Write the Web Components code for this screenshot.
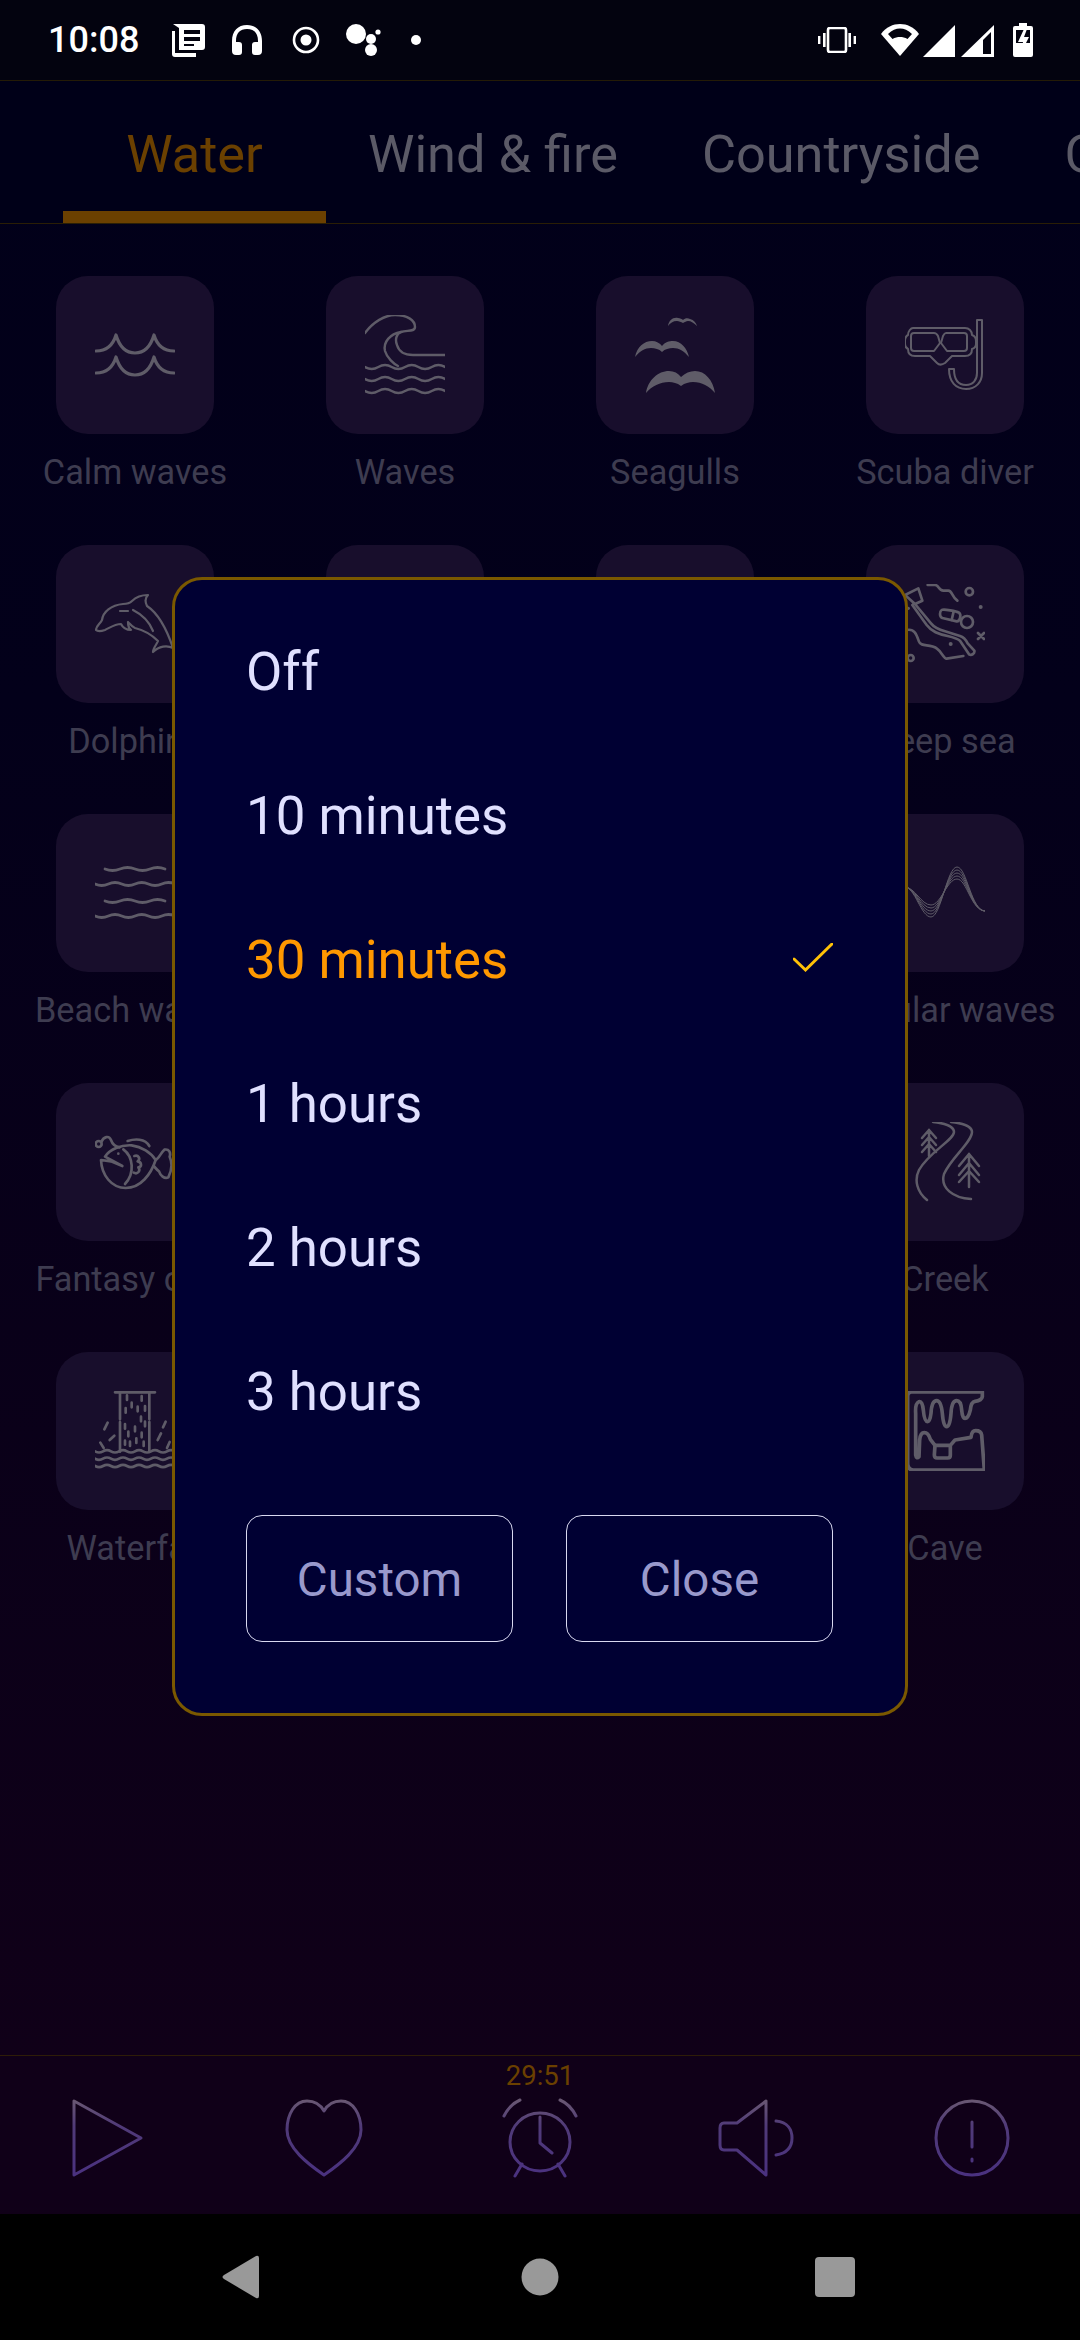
<!DOCTYPE html>
<html lang="en"><head><meta charset="utf-8"><title>Sleep timer</title>
<style>
html,body{margin:0;padding:0;background:#000}
body{width:1080px;height:2340px;overflow:hidden;font-family:Roboto,"Liberation Sans",sans-serif}
</style></head><body>
<sound-app>
  <status-bar slot="status"></status-bar>
  <sound-tabs slot="tabs"><tab-item active>Water</tab-item><tab-item>Wind &amp; fire</tab-item><tab-item>Countryside</tab-item><tab-item>City</tab-item></sound-tabs>
  <sound-grid slot="grid">
    <sound-tile icon="calm">Calm waves</sound-tile><sound-tile icon="waves">Waves</sound-tile><sound-tile icon="gulls">Seagulls</sound-tile><sound-tile icon="scuba">Scuba diver</sound-tile>
    <sound-tile icon="dolphin">Dolphins</sound-tile><sound-tile></sound-tile><sound-tile></sound-tile><sound-tile icon="deep">Deep sea</sound-tile>
    <sound-tile icon="beach">Beach waves</sound-tile><sound-tile></sound-tile><sound-tile></sound-tile><sound-tile icon="regular">Regular waves</sound-tile>
    <sound-tile icon="fish">Fantasy cave</sound-tile><sound-tile></sound-tile><sound-tile></sound-tile><sound-tile icon="creek">Creek</sound-tile>
    <sound-tile icon="fall">Waterfall</sound-tile><sound-tile></sound-tile><sound-tile></sound-tile><sound-tile icon="cave">Cave</sound-tile>
  </sound-grid>
  <player-bar slot="player" time="29:51"></player-bar>
  <nav-bar slot="nav"></nav-bar>
  <timer-dialog slot="dialog">
    <dialog-option>Off</dialog-option><dialog-option>10 minutes</dialog-option><dialog-option selected>30 minutes</dialog-option><dialog-option>1 hours</dialog-option><dialog-option>2 hours</dialog-option><dialog-option>3 hours</dialog-option>
    <outline-button slot="actions">Custom</outline-button><outline-button slot="actions">Close</outline-button>
  </timer-dialog>
</sound-app>
<script>
const wave=(x,y,n,w,a)=>{let d=`M${x} ${y}`;for(let i=0;i<n;i++){d+=` q${w/4} ${-a} ${w/2} 0 t${w/2} 0`;}return d;};
const IC={
calm:{vb:'0 0 80 80',sw:3.2,h:`<path d="M1 36C12 36 18 30 21 20C24 30 30 38 40 38C50 38 56 30 59 20C62 30 68 36 79 36M1 58C12 58 18 52 21 42C24 52 30 60 40 60C50 60 56 52 59 42C62 52 68 58 79 58"/>`},
waves:{vb:'0 0 80 80',sw:2.4,h:`<path d="M0 18C8 7 20 0 30 0C42 0 50 5 50 12C50 17 42 15 36 17C31 19 30 25 32 30C34 37 40 40 48 40H80"/><path d="M36 17C25 19 18 27 20 36C22 43 29 49 33 51"/><path d="${wave(0,52,3,26.7,-4)}"/><path d="${wave(0,64,3,26.7,-4)}"/><path d="${wave(0,76,3,26.7,-4)}"/>`},
gulls:{vb:'0 0 80 80',sw:0,h:`<g class="f"><path d="M33 11C34 5 38 2 43 3C45 3 47 4 48 5C50 3 53 3 55 4C59 5 61 8 62 11C59 8 56 6 53 6C51 6 50 7 48 8C46 7 44 6 42 6C38 6 35 8 33 11Z"/><path d="M0 42C2 32 9 26 17 26C21 26 25 28 27 31C30 27 34 26 38 26C46 26 52 33 54 42C49 36 44 33 38 33C34 33 30 34 27 37C24 34 20 33 16 33C10 33 5 36 0 42Z"/><path d="M11 78C13 65 23 56 34 56C39 56 43 58 46 62C50 58 55 56 60 56C70 56 78 65 80 78C74 71 67 67 58 67C54 67 50 68 46 71C42 68 38 67 34 67C25 67 17 71 11 78Z"/></g>`},
scuba:{vb:'0 0 80 80',sw:2,h:`<path d="M77 5V58C77 67 71 74 61 74C51 74 44 67 44 54H49C49 64 53 70 61 70C68 70 72 65 72 58V5Z" /><path d="M8 13H60C64 13 67 16 67 20C70 21 71 23 71 26V29C71 32 70 33 67 34C67 39 64 41 60 41H47L40 48C37 50 34 50 32 48L25 41H10C6 41 3 39 3 34C1 33 0 31 0 29V26C0 23 1 21 3 20C3 16 6 13 8 13Z"/><path d="M9 18H29C31 18 32 19 33 21L35 28L29 36H9C7 36 6 35 6 33V21C6 19 7 18 9 18Z"/><path d="M41 18H59C61 18 62 19 62 21V33C62 35 61 36 59 36H42L36 28L38 21C39 19 40 18 41 18Z"/>`},
dolphin:{vb:'0 0 80 80',sw:2.2,h:`<path d="M1 46C1 42 5 40 7 36C8 28 16 21 28 20C32 20 35 19 37 17C41 13 47 11 53 11C50 14 50 18 52 22C64 30 72 46 78 64C72 61 64 62 58 68C58 64 62 60 63 57C56 50 48 46 40 44C37 43 35 40 33 38C33 41 33 44 36 46C32 46 28 44 26 40C20 40 16 43 10 46C7 47 3 48 1 46Z"/><path d="M25 27H33M38 26C46 30 54 37 58 47"/>`},
beach:{vb:'0 0 80 80',sw:2.8,h:`<path d="${wave(10,16,2,30,-3)}"/><path d="${wave(0,31,3,26.7,-3)}"/><path d="${wave(10,48,2,30,-3)}"/><path d="${wave(0,63,3,26.7,-3)}"/>`},
regular:{vb:'0 0 80 80',sw:1,h:[0,1,2,3,4].map(i=>`<path d="M0 34C10 34 16 ${64-i*3} 26 ${64-i*3}C36 ${64-i*3} 42 ${14+i*3} 52 ${14+i*3}C62 ${14+i*3} 66 58 80 58"/>`).join('')},
deep:{vb:'0 72 240 240',sw:8,h:`<path d="M68 75H90C102 75 100 92 115 92H130C142 92 140 110 157 122"/><circle cx="193" cy="95" r="11"/><circle cx="227" cy="141" r="6" class="f"/><circle cx="137" cy="252" r="6" class="f"/><path d="M219 219L237 237M237 219L219 237"/><circle cx="17" cy="294" r="9"/><circle cx="10" cy="145" r="5" class="f"/><path d="M0 105L40 85L52 122L30 132ZM30 132L78 190C88 203 100 208 120 214L165 228C178 232 183 240 188 250L208 272C210 280 200 288 192 283L165 242C158 236 145 232 128 228C100 222 80 215 65 195L22 135"/><path d="M110 150C116 146 155 154 162 158C170 164 165 185 155 184L112 174C102 170 104 154 110 150Z"/><path d="M146 154L140 180"/><circle cx="186" cy="186" r="18"/><path d="M5 210C30 205 35 225 42 245C48 262 75 250 95 265C110 275 115 295 125 296L175 288"/>`},
fish:{vb:'30 36 240 240',sw:8,h:`<circle cx="41" cy="102" r="9"/><path d="M49 96C56 80 72 75 78 90C82 102 90 110 104 112"/><path d="M128 93C150 86 180 85 193 108"/><path d="M60 140C74 118 108 104 140 106C170 110 198 128 212 150C198 192 168 234 122 234C80 234 50 196 48 150L78 154L112 168L60 140Z"/><path d="M115 118C145 140 150 190 120 222"/><circle cx="100" cy="131" r="4" class="f"/><path d="M148 138C160 134 168 146 158 154C170 156 172 170 160 172C168 182 158 194 146 188"/><path d="M212 150C222 146 226 130 238 119C252 116 258 128 254 140C262 158 260 182 250 202C238 208 226 196 222 184C216 180 210 172 206 168"/>`},
creek:{vb:'0 0 80 80',sw:2.5,h:`<path d="M28 0C38 1 49 4 49 10C49 18 24 30 14 48C9 58 12 70 22 78"/><path d="M46 0C56 1 67 4 67 10C67 20 46 36 39 52C35 66 48 76 66 77"/><path d="M24 8V34M24 8L17 16M24 8L31 16M24 15L17 23M24 15L31 23M24 22L17 30M24 22L31 30" /><path d="M64 32V65M64 32L54 44M64 32L74 44M64 41L54 53M64 41L74 53M64 49L54 60M64 49L74 60"/>`},
fall:{vb:'30 33 240 240',sw:8,h:`<path d="M90 37H210M105 37V118M105 126V215M193 37V118M193 126V215"/><g stroke-dasharray="14 60"><path d="M126 46V70M170 48V62M140 68V82M158 80V100M122 84V98M180 78V94M168 110V124M120 132V146M150 140V156M180 125V145M130 155V172M170 158V172M120 182V194M154 175V190M135 185V198M176 185V198"/></g><path d="M68 128L58 148M242 125L234 142M88 167L74 180M228 160L218 180M46 188L56 204M254 186L246 204"/><path d="${wave(30,214,5,48,-7)}"/><path d="${wave(30,236,5,48,-7)}"/><path d="${wave(30,258,5,48,-7)}"/>`},
cave:{vb:'0 33 240 240',sw:11,h:`<path d="M232 36H20Q8 36 8 50V250Q8 270 25 270H238L230 165Q228 152 212 152Q200 152 198 172L150 180L136 196H90L88 225Q88 234 96 234H128Q136 234 136 226V196"/><path d="M90 196L76 178Q70 158 58 158Q46 158 44 180L42 230Q34 238 32 225V100Q30 70 42 65Q52 62 55 90Q58 125 68 125Q75 125 78 100Q80 62 95 62Q108 62 112 100Q115 140 125 140Q135 140 138 100Q140 62 155 62Q168 62 170 90Q172 115 180 115Q190 115 196 90Q198 66 210 64Q230 62 232 50V36"/>`}
};
const mk=(tag,css,html)=>{customElements.define(tag,class extends HTMLElement{
  constructor(){super();const r=this.attachShadow({mode:'open'});r.innerHTML=`<style>${css}</style>${typeof html==='function'?html(this):html}`;}
});};

mk('sound-app',`:host{display:block;position:relative;width:1080px;height:2340px;overflow:hidden}
.wrap{display:flex;flex-direction:column;height:100%;background:linear-gradient(#010019 0%,#03001a 30%,#100018 88%)}
.fill{flex:1;min-height:0}`,
`<div class="wrap"><slot name="status"></slot><slot name="tabs"></slot><div class="fill"><slot name="grid"></slot></div><slot name="player"></slot><slot name="nav"></slot></div><slot name="dialog"></slot>`);

mk('status-bar',`:host{display:block;height:80px;box-sizing:content-box;background:#03030f;border-bottom:1px solid #241b06}
.row{display:flex;align-items:center;height:80px}
.t{font:500 36px/80px Roboto,sans-serif;color:#fff;margin-left:48px;width:124px}
svg{display:block;fill:#fff}
.l{flex:1}`,
`<div class="row"><span class="t">10:08</span>
<svg width="34" height="34" viewBox="0 0 34 34"><path d="M1 1H30Q33 1 33 4V24Q33 27 30 27H7V5Z"/><path d="M0 8H3V30H24V34H3Q0 34 0 31Z"/><path d="M12 8H28V12H12ZM12 15H28V19H12ZM12 22H22V24H12Z" fill="#03030f" transform="translate(0 -1)"/></svg>
<svg width="32" height="32" viewBox="0 0 32 32" style="margin-left:25px"><path d="M1 17C1 7 7 1 16 1S31 7 31 17V27Q31 31 27 31H24Q21 31 21 28V21Q21 18 24 18H27V17C27 9 23 5 16 5S5 9 5 17V18H8Q11 18 11 21V28Q11 31 8 31H5Q1 31 1 27Z"/></svg>
<svg width="28" height="28" viewBox="0 0 28 28" style="margin-left:29px"><circle cx="14" cy="14" r="12" fill="none" stroke="#fff" stroke-width="2.6"/><circle cx="14" cy="14" r="5.5"/></svg>
<svg width="38" height="34" viewBox="0 0 38 34" style="margin-left:25px"><circle cx="11" cy="11" r="10"/><circle cx="26" cy="16" r="5"/><circle cx="33" cy="9" r="2.6"/><circle cx="26" cy="27" r="6"/></svg>
<svg width="10" height="10" viewBox="0 0 10 10" style="margin-left:28px"><circle cx="5" cy="5" r="5"/></svg>
<span class="l"></span>
<svg width="38" height="26" viewBox="0 0 38 26" style="margin-right:24px"><path d="M10 3Q10 1 12 1H26Q28 1 28 3V23Q28 25 26 25H12Q10 25 10 23Z" fill="none" stroke="#fff" stroke-width="2.6"/><path d="M5 6H7.6V20H5ZM0 9H2.4V17H0ZM30.4 6H33V20H30.4ZM35.6 9H38V17H35.6Z"/></svg>
<svg width="40" height="34" viewBox="0 0 40 34" style="margin-right:3px"><path d="M20 33L1 11C6 4 13 1 20 1S34 4 39 11Z"/><path d="M8 11C12 7 16 5.5 20 5.5S28 7 32 11L27.5 16C25 14.5 22.5 14 20 14S15 14.5 12.5 16Z" fill="#03030f"/></svg>
<svg width="33" height="33" viewBox="0 0 33 33" style="margin-right:5px"><path d="M32 1V33H0Z"/></svg>
<svg width="33" height="33" viewBox="0 0 33 33" style="margin-right:19px"><path d="M33 1V33H0ZM30 8L22 16V30H30Z" fill-rule="evenodd"/></svg>
<svg width="20" height="34" viewBox="0 0 20 34" style="margin-right:47px"><path d="M6 0H14V3H18Q20 3 20 5V32Q20 34 18 34H2Q0 34 0 32V5Q0 3 2 3H6Z"/><path d="M3 7H17V20H3Z" fill="#03030f"/><path d="M11 6L5 19H10L8 30L16 14H11L14 6Z"/></svg>
</div>`);

mk('sound-tabs',`:host{display:flex;height:142px;box-sizing:content-box;background:#000018;border-bottom:1px solid #2a1e05;padding-left:63px;overflow:hidden;white-space:nowrap}`,`<slot></slot>`);
mk('tab-item',`:host{display:block;flex:none;position:relative;height:142px;box-sizing:border-box;padding:0 42px;font:400 52.3px/146px Roboto,sans-serif;color:#5b5a67;text-align:center;overflow:hidden}
:host([active]){color:#6b4000;width:263px;padding:0}
:host([active])::after{content:"";position:absolute;left:0;right:0;bottom:0;height:12px;background:#6b4000}`,`<slot></slot>`);

mk('sound-grid',`:host{display:grid;grid-template-columns:repeat(4,270px);grid-auto-rows:269px;padding-top:52px}`,`<slot></slot>`);
mk('sound-tile',`:host{display:flex;flex-direction:column;align-items:center;color:#3e3c50;font:400 34.3px/36px Roboto,sans-serif;white-space:nowrap}
.box{width:158px;height:158px;border-radius:32px;background:#180e2c;display:flex;align-items:center;justify-content:center;flex:none}
.lab{margin-top:20px}
svg{width:80px;height:80px;display:block;fill:none;stroke:#5f5c68;stroke-linecap:round;stroke-linejoin:round}
.f{fill:#5f5c68;stroke:none}`,
t=>{const ic=IC[t.getAttribute('icon')];return `<div class="box">${ic?`<svg viewBox="${ic.vb}" stroke-width="${ic.sw}">${ic.h}</svg>`:''}</div><div class="lab"><slot></slot></div>`;});

const grad=`<defs><linearGradient id="g" x1="0" y1="0" x2="0" y2="80" gradientUnits="userSpaceOnUse"><stop offset="0" stop-color="#6b5a72"/><stop offset=".35" stop-color="#503a78"/><stop offset="1" stop-color="#4a3180"/></linearGradient></defs>`;
mk('player-bar',`:host{display:block;height:159px;box-sizing:border-box;background:#100018;border-top:1px solid #2e1d08}
.time{height:42px;font:400 27.5px/40px Roboto,sans-serif;color:#6b4000;text-align:center}
.row{display:grid;grid-template-columns:repeat(5,216px)}
.c{display:flex;justify-content:center}
svg{width:80px;height:80px;display:block;fill:none;stroke:url(#g);stroke-width:3;stroke-linecap:round;stroke-linejoin:round}`,
t=>`<svg width="0" height="0" style="position:absolute;width:0;height:0">${grad}</svg><div class="time">${t.getAttribute('time')}</div><div class="row">
<div class="c"><svg viewBox="0 0 80 80"><path d="M6 3V77L73 40Z"/></svg></div>
<div class="c"><svg viewBox="0 0 80 80"><path d="M40 13C36 6 30 3 23 3C11 3 3 16 3 32C3 50 24 66 40 77C56 66 77 50 77 32C77 16 69 3 57 3C50 3 44 6 40 13Z"/></svg></div>
<div class="c"><svg viewBox="0 0 80 80"><ellipse cx="40" cy="44" rx="30" ry="29"/><path d="M40 19V45L52 55M4 18C8 10 13 5 20 2M76 18C72 10 67 5 60 2M22 66L15 78M58 66L65 78"/></svg></div>
<div class="c"><svg viewBox="0 0 80 80"><path d="M50 3V77L21 52H8Q4 52 4 47V30Q4 25 8 25H21Z"/><path d="M60 23C72 24 76 32 76 40C76 48 72 55 60 57"/></svg></div>
<div class="c"><svg viewBox="0 0 80 80"><ellipse cx="40" cy="40" rx="36" ry="37"/><path d="M40 24V49M40 61V63"/></svg></div>
</div>`);

mk('nav-bar',`:host{display:flex;height:126px;background:#000;align-items:center;justify-content:center}
svg{display:block;fill:#999}`,
`<svg width="860" height="64" viewBox="0 0 860 64"><path d="M114 30L146 11Q149 10 149 13V51Q149 54 146 53L114 34Q111 32 114 30Z"/><circle cx="430" cy="32" r="18.5"/><rect x="705" y="12" width="40" height="40" rx="4"/></svg>`);

mk('timer-dialog',`:host{display:block;position:absolute;left:172px;top:577px;width:736px;height:1139px;box-sizing:border-box;background:#000033;border:3px solid #7a5800;border-radius:30px;padding:18px 72px 0 71px;color:#e0e0ff}
.acts{display:flex;justify-content:space-between;margin-top:53px}`,
`<slot></slot><div class="acts"><slot name="actions"></slot></div>`);
mk('dialog-option',`:host{display:flex;align-items:center;justify-content:space-between;height:144px;font:400 52.8px/60px Roboto,sans-serif;color:#e0e0ff;white-space:nowrap}
:host([selected]){color:#ff9800}
span{display:block;margin-top:4px}
svg{width:40px;height:30px;display:block;fill:none;stroke:#ffc107;stroke-width:3;stroke-linecap:round}`,
t=>`<span><slot></slot></span>${t.hasAttribute('selected')?'<svg viewBox="0 0 40 30"><path d="M1 16L12.5 27L39 1"/></svg>':''}`);
mk('outline-button',`:host{display:flex;align-items:center;justify-content:center;width:267px;height:127px;box-sizing:border-box;border:1.5px solid #d8d8f0;border-radius:16px;padding-top:5px;font:400 47.5px/1 Roboto,sans-serif;color:#9999cc}`,`<slot></slot>`);
</script>
</body></html>
